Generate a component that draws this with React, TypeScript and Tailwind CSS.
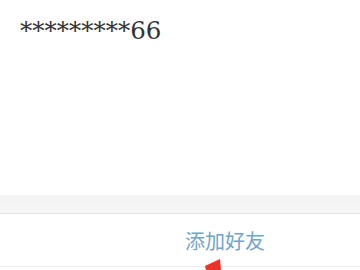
import React from "react";

export default function App() {
  return (
    <div className="w-[360px] h-[270px] bg-white overflow-hidden relative flex flex-col">
      <div className="h-[195px] pl-[20px] pt-[13px]">
        <div
          className="text-[24.5px] leading-[36px] text-[#333]"
          style={{ fontFamily: '"DejaVu Serif", "Noto Sans CJK SC", serif' }}
        >
          *********66
        </div>
      </div>
      <div className="h-[19px] bg-gradient-to-b from-[#f3f3f3] to-[#f7f7f7] border-b border-[#e4e4e4]" />
      <div className="h-[53px] flex items-start justify-start pl-[185px] pt-[16px] border-b border-[#ececec]">
        <span
          className="text-[20px] leading-[22px] text-[#6fa5c7]"
          style={{ fontFamily: '"Noto Sans CJK SC", sans-serif' }}
        >
          添加好友
        </span>
      </div>
      <svg className="absolute left-[200px] top-[256px]" width="30" height="14" viewBox="0 0 30 14">
        <polygon points="20,3 5,10 6,14 21,14" fill="#e8322a" />
      </svg>
    </div>
  );
}
